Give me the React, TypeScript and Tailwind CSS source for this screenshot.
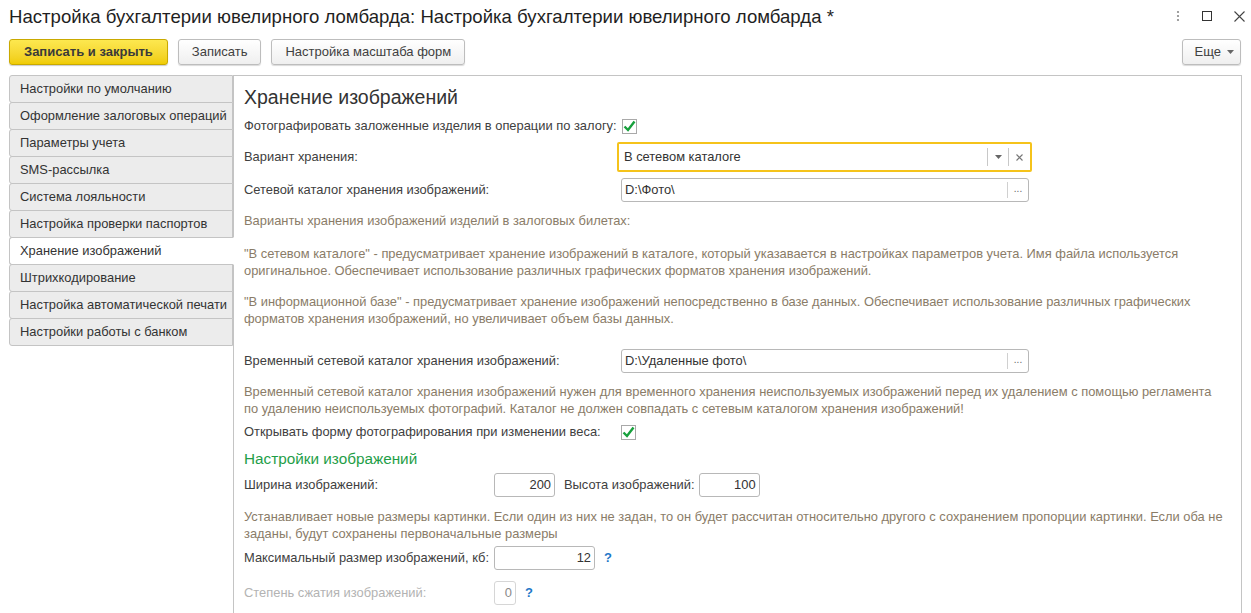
import React from 'react';

const NAV = [
  'Настройки по умолчанию',
  'Оформление залоговых операций',
  'Параметры учета',
  'SMS-рассылка',
  'Система лояльности',
  'Настройка проверки паспортов',
  'Хранение изображений',
  'Штрихкодирование',
  'Настройка автоматической печати',
  'Настройки работы с банком',
];

const ACTIVE = 'Хранение изображений';

function Check() {
  return (
    <span className="inline-flex h-[15px] w-[15px] items-center justify-center border border-[#a9a9a9] bg-white">
      <svg width="13" height="12" viewBox="0 0 13 12">
        <path d="M1.5 6.5 L5 10 L11.5 1.5" fill="none" stroke="#17a03c" strokeWidth="2.4" />
      </svg>
    </span>
  );
}

function Help() {
  return <span className="ml-[9px] text-[13px] font-bold text-[#1f78c8]">?</span>;
}

function PathInput({ value, width }: { value: string; width: string }) {
  return (
    <div className={`flex h-[24px] ${width} items-stretch rounded-[3px] border border-[#b8b8b8] bg-white`}>
      <div className="flex flex-1 items-center pl-[3px] text-[#333]">{value}</div>
      <div className="my-[3px] w-px bg-[#d0d0d0]" />
      <div className="flex w-[20px] items-center justify-center pb-[3px] text-[10px] text-[#666]">...</div>
    </div>
  );
}

function NumInput({ value, width, disabled }: { value: string; width: string; disabled?: boolean }) {
  return (
    <div
      className={`flex h-[24px] ${width} items-center justify-end rounded-[3px] border bg-white pr-[3px] ${
        disabled ? 'border-[#d6d6d6] text-[#8a8a8a]' : 'border-[#b8b8b8] text-[#333]'
      }`}
    >
      {value}
    </div>
  );
}

export default function App() {
  return (
    <div
      className="flex h-[613px] w-[1251px] flex-col overflow-hidden bg-white text-[12.9px] text-[#404040]"
      style={{ fontFamily: "'Liberation Sans', Arial, sans-serif" }}
    >
      {/* title bar */}
      <div className="flex h-[36px] items-center pl-[9px] pr-[6px]">
        <div className="flex-1 pb-[2px] text-[18.6px] text-[#1f1f1f]">
          Настройка бухгалтерии ювелирного ломбарда: Настройка бухгалтерии ювелирного ломбарда *
        </div>
        <div className="flex items-center gap-[22px] pb-[4px]">
          <svg width="4" height="12" viewBox="0 0 4 12">
            <circle cx="2" cy="2" r="1.1" fill="#8a8a8a" />
            <circle cx="2" cy="6" r="1.1" fill="#8a8a8a" />
            <circle cx="2" cy="10" r="1.1" fill="#8a8a8a" />
          </svg>
          <svg width="10" height="10" viewBox="0 0 10 10">
            <rect x="0.5" y="0.5" width="9" height="9" fill="none" stroke="#333" />
          </svg>
          <svg width="11" height="11" viewBox="0 0 11 11">
            <path d="M0.5 0.5 L10.5 10.5 M10.5 0.5 L0.5 10.5" stroke="#444" strokeWidth="1.1" />
          </svg>
        </div>
      </div>

      {/* toolbar */}
      <div className="mt-[3px] flex h-[26px] items-stretch pl-[9px] pr-[10px]">
        <button className="rounded-[3px] border border-[#c9a900] bg-gradient-to-b from-[#fde84f] to-[#f0cc00] px-[14px] text-[13px] font-bold text-[#3a3a3a] shadow-[0_1px_1px_rgba(0,0,0,0.2)]">
          Записать и закрыть
        </button>
        <button className="ml-[10px] rounded-[3px] border border-[#bdbdbd] bg-gradient-to-b from-white to-[#efefef] px-[13px] text-[13px] text-[#404040] shadow-[0_1px_1px_rgba(0,0,0,0.15)]">
          Записать
        </button>
        <button className="ml-[10px] rounded-[3px] border border-[#bdbdbd] bg-gradient-to-b from-white to-[#efefef] px-[13px] text-[13px] text-[#404040] shadow-[0_1px_1px_rgba(0,0,0,0.15)]">
          Настройка масштаба форм
        </button>
        <div className="flex-1" />
        <button className="flex items-center gap-[6px] rounded-[3px] border border-[#bdbdbd] bg-gradient-to-b from-white to-[#efefef] pl-[12px] pr-[6px] text-[13px] text-[#404040] shadow-[0_1px_1px_rgba(0,0,0,0.15)]">
          Еще
          <svg width="7" height="4" viewBox="0 0 7 4">
            <path d="M0 0 H7 L3.5 4 Z" fill="#666" />
          </svg>
        </button>
      </div>

      {/* body */}
      <div className="mt-[10px] flex flex-1 pl-[9px] pr-[9px]">
        <div className="flex w-[224px] flex-col">
          {NAV.map((n, i) => {
            const active = n === ACTIVE;
            return (
              <div
                key={n}
                className={`relative flex h-[28px] items-center whitespace-nowrap rounded-l-[3px] border border-[#c4c4c4] pl-[10px] text-[#333] ${
                  i > 0 ? '-mt-px' : ''
                } ${active ? 'z-10 -mr-px border-r-white bg-white' : 'bg-[#ececec]'}`}
              >
                {n}
              </div>
            );
          })}
        </div>

        <div className="flex flex-1 flex-col border-l border-r border-t border-[#c4c4c4] pl-[10px] pt-[10px]">
          <div className="flex h-[24px] items-center text-[19.5px] text-[#333]">Хранение изображений</div>

          <div className="mt-[6px] flex h-[20px] items-center">
            <span className="mr-[5px]">Фотографировать заложенные изделия в операции по залогу:</span>
            <Check />
          </div>

          <div className="mt-[6px] flex h-[30px] items-center">
            <span className="w-[373px]">Вариант хранения:</span>
            <div className="flex h-[30px] w-[415px] items-stretch rounded-[2px] border-2 border-[#f5c31b] bg-white">
              <div className="flex flex-1 items-center pl-[5px] text-[#333]">В сетевом каталоге</div>
              <div className="my-[4px] w-px bg-[#c8c8c8]" />
              <div className="flex w-[20px] items-center justify-center">
                <svg width="7" height="4" viewBox="0 0 7 4">
                  <path d="M0 0 H7 L3.5 4 Z" fill="#666" />
                </svg>
              </div>
              <div className="my-[4px] w-px bg-[#c8c8c8]" />
              <div className="flex w-[21px] items-center justify-center">
                <svg width="7" height="7" viewBox="0 0 7 7">
                  <path d="M0.5 0.5 L6.5 6.5 M6.5 0.5 L0.5 6.5" stroke="#777" strokeWidth="1.1" />
                </svg>
              </div>
            </div>
          </div>

          <div className="mt-[6px] flex h-[24px] items-center">
            <span className="w-[377px]">Сетевой каталог хранения изображений:</span>
            <PathInput value="D:\Фото\" width="w-[408px]" />
          </div>

          <div className="mt-[10px] leading-[17px] text-[#8a7c68]">
            Варианты хранения изображений изделий в залоговых билетах:
          </div>

          <div className="mt-[16px] pr-[15px] leading-[17px] text-[#8a7c68]">
            "В сетевом каталоге" - предусматривает хранение изображений в каталоге, который указавается в настройках
            параметров учета. Имя файла используется оригинальное. Обеспечивает использование различных графических
            форматов хранения изображений.
          </div>

          <div className="mt-[14px] pr-[15px] leading-[17px] text-[#8a7c68]">
            "В информационной базе" - предусматривает хранение изображений непосредственно в базе данных. Обеспечивает
            использование различных графических форматов хранения изображений, но увеличивает объем базы данных.
          </div>

          <div className="mt-[22px] flex h-[24px] items-center">
            <span className="w-[377px]">Временный сетевой каталог хранения изображений:</span>
            <PathInput value="D:\Удаленные фото\" width="w-[408px]" />
          </div>

          <div className="mt-[10px] pr-[15px] leading-[17px] text-[#8a7c68]">
            Временный сетевой каталог хранения изображений нужен для временного хранения неиспользуемых изображений перед
            их удалением с помощью регламента по удалению неиспользуемых фотографий. Каталог не должен совпадать с
            сетевым каталогом хранения изображений!
          </div>

          <div className="mt-[5px] flex h-[20px] items-center">
            <span className="w-[377px]">Открывать форму фотографирования при изменении веса:</span>
            <Check />
          </div>

          <div className="mt-[6px] flex h-[22px] items-center text-[15.3px] text-[#1f9e48]">Настройки изображений</div>

          <div className="mt-[3px] flex h-[24px] items-center">
            <span className="w-[250px]">Ширина изображений:</span>
            <NumInput value="200" width="w-[61px]" />
            <span className="ml-[9px] mr-[4px]">Высота изображений:</span>
            <NumInput value="100" width="w-[61px]" />
          </div>

          <div className="mt-[11px] pr-[15px] leading-[17px] text-[#8a7c68]">
            Устанавливает новые размеры картинки. Если один из них не задан, то он будет рассчитан относительно другого с
            сохранением пропорции картинки. Если оба не заданы, будут сохранены первоначальные размеры
          </div>

          <div className="mt-[4px] flex h-[24px] items-center">
            <span className="w-[250px]">Максимальный размер изображений, кб:</span>
            <NumInput value="12" width="w-[101px]" />
            <Help />
          </div>

          <div className="mt-[10px] flex h-[25px] items-center">
            <span className="w-[250px] text-[#b3b3b3]">Степень сжатия изображений:</span>
            <NumInput value="0" width="w-[22px]" disabled />
            <Help />
          </div>
        </div>
      </div>
    </div>
  );
}
